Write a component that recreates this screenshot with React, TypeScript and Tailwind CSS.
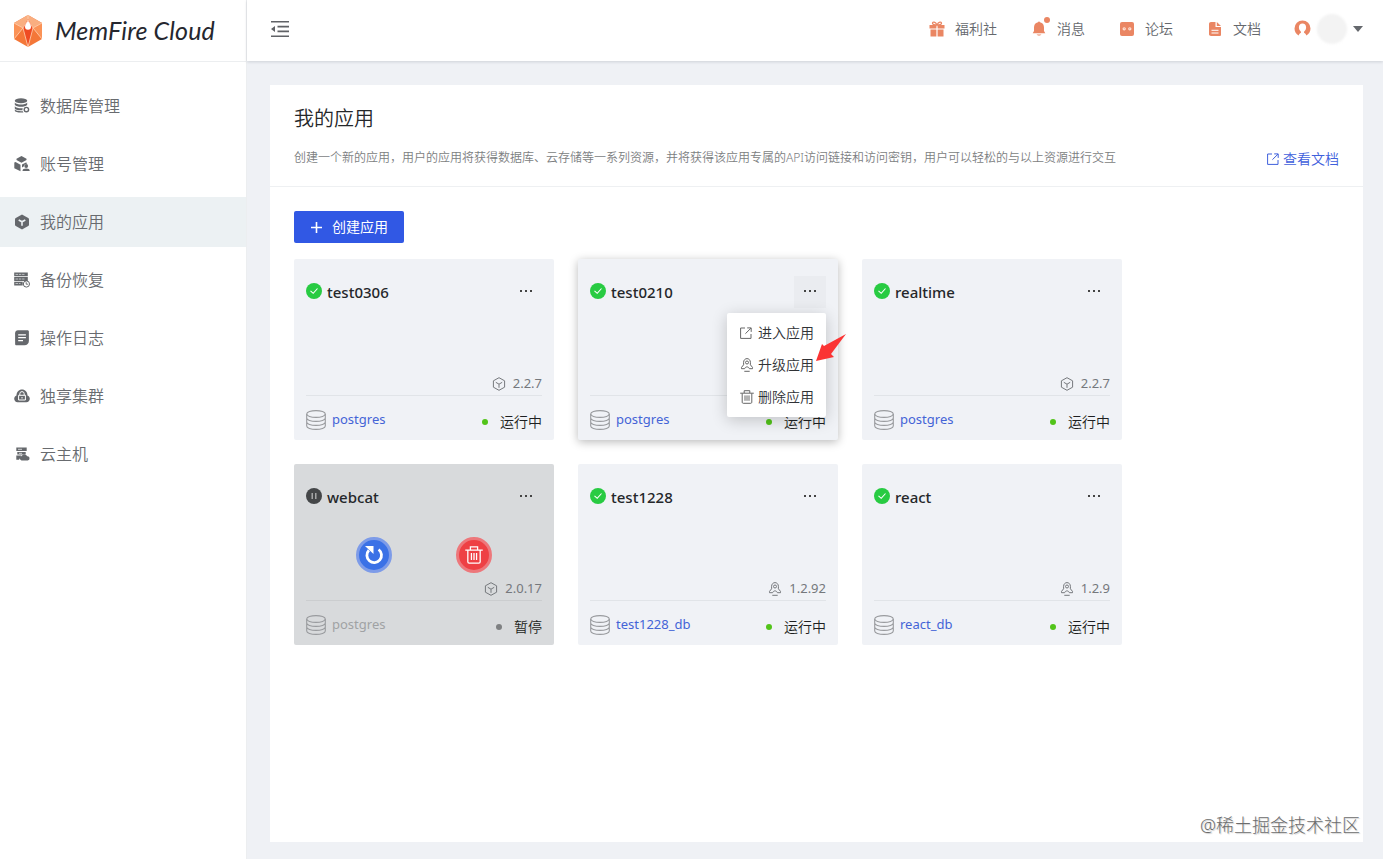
import { ReactNode } from "react";
import { clsx } from "clsx";

type IconName = "cube" | "rocket";

interface AppProps {
  name: string;
  db: string;
  version: string;
  icon: IconName;
  paused?: boolean;
  active?: boolean;
}

interface MenuProps {
  label: string;
  icon: ReactNode;
}

const apps: AppProps[] = [
  { name: "test0306", db: "postgres", version: "2.2.7", icon: "cube" },
  { name: "test0210", db: "postgres", version: "2.2.7", icon: "cube", active: true },
  { name: "realtime", db: "postgres", version: "2.2.7", icon: "cube" },
  { name: "webcat", db: "postgres", version: "2.0.17", icon: "cube", paused: true },
  { name: "test1228", db: "test1228_db", version: "1.2.92", icon: "rocket" },
  { name: "react", db: "react_db", version: "1.2.9", icon: "rocket" },
];

const menu: MenuProps[] = [
  {
    label: "数据库管理",
    icon: (
      <>
        <ellipse cx="7" cy="2.8" rx="6.2" ry="2.5" />
        <path d="M.8 4.600c1 1.500 3.600 2 6.200 2s5.200-.5 6.200-2v2.200c-1 1.400-3.600 2-6.200 2s-5.200-.6-6.200-2z" />
        <path d="M.8 8.200c1 1.500 3.600 2 6.200 2h1.800a3.800 3.800 0 0 0-.3 2H7c-3 0-6.200-.6-6.200-2z" />
        <path d="M.8 11.600c1 1.200 3.600 1.700 6.200 1.700h1.800l.6 1.200c-4 .4-8.600-.2-8.600-2z" />
        <circle cx="12.400" cy="11.600" r="2.200" fill="none" stroke="currentColor" strokeWidth="1.400" />
      </>
    ),
  },
  {
    label: "账号管理",
    icon: (
      <>
        <path d="M7.500 0l5 2.700v1.200L7.500 6.800l-5-2.900V2.700z" />
        <path d="M.3 6.500l1.200-.6 5 2.800v6.500L.3 12.200z" />
        <path d="M8 8.600l4-2.200 1 .5-.3.800c-1.600 0-2.700 1.100-2.700 2.600L8 11.500z" />
        <circle cx="12.200" cy="10" r="1.900" />
        <path d="M8.500 15c0-2 1.500-2.600 3.700-2.600s3.500.6 3.500 2.600z" />
      </>
    ),
  },
  {
    label: "我的应用",
    icon: (
      <>
        <path d="M8 .6l6.200 3.500c.5.300.8.700.8 1.200v5.500c0 .5-.3.900-.8 1.200L8 15.400 1.800 12c-.5-.3-.8-.7-.8-1.200V5.300c0-.5.300-.9.8-1.200z" />
        <path d="M4.700 6L8 7.800 11.300 6M8 7.800v4" fill="none" stroke="#ecf1f3" strokeWidth="1.600" />
      </>
    ),
  },
  {
    label: "备份恢复",
    icon: (
      <>
        <path d="M.2 .4h13.600v3.900H.2zM.2 5.100h13.600v3.800H.2zM.2 9.700h8.500v3.700H.2z" />
        <path d="M1.500 2.400h9M1.500 7h9M1.500 11.500h5" stroke="#c4c7ca" strokeWidth=".9" strokeDasharray="2.500 .8" />
        <circle cx="12.400" cy="12" r="3.100" fill="#fff" stroke="currentColor" />
        <path d="M12.200 10.200v2H14" fill="none" stroke="currentColor" strokeWidth=".9" />
      </>
    ),
  },
  {
    label: "操作日志",
    icon: (
      <>
        <path d="M4 .3h9.500c.8 0 1.400.6 1.400 1.400v9c0 2.800-1.800 4.600-4.500 4.600H2.500c-.8 0-1.400-.5-1.400-1.300V3.200C1.100 1.500 2.300.3 4 .3z" />
        <path d="M4.200 4.800h7.700M4.200 7.700h7.700M4.200 10.600h4.800" stroke="#fff" strokeWidth="1.200" />
      </>
    ),
  },
  {
    label: "独享集群",
    icon: (
      <>
        <path d="M3.600 14.200C1.700 14.200.2 12.700.2 10.800c0-1.600.9-2.800 2.300-3.300C2.600 4 4.900 1.500 8 1.500s5.400 2.500 5.500 6c1.400.5 2.300 1.700 2.300 3.300 0 1.900-1.500 3.400-3.400 3.400z" />
        <path d="M5.800 7V5.800a2.200 2.200 0 0 1 4.400 0V7M4.600 7.300h6.800v4.700H4.600zM8 9v1.500" fill="none" stroke="#fff" strokeWidth="1" />
      </>
    ),
  },
  {
    label: "云主机",
    icon: (
      <>
        <path d="M2.300 1.500h10.400V5H2.300zM3.300 6h8.400v2.600H3.300zM2.300 9.500h5.200L5 13.800H2.300z" />
        <path d="M4 3.300h4M5 7.300h3" stroke="#fff" strokeWidth=".7" />
        <path d="M7.500 14.400a2.300 2.300 0 0 1 .2-4.500 3.100 3.100 0 0 1 5.500.3 2.100 2.100 0 0 1 .5 4.200z" />
      </>
    ),
  },
];

function CubeIcon() {
  return (
    <svg className="h-[14px] w-[14px]" viewBox="0 0 14 14" fill="none" stroke="currentColor">
      <path d="M7 .7l5.600 3.100v6.400L7 13.300 1.400 10.200V3.800zM3.800 5.300L7 7.200l3.200-1.900M7 7.200v3.600" />
    </svg>
  );
}

function RocketIcon() {
  return (
    <svg className="h-[14px] w-[14px]" viewBox="0 0 14 14" fill="none" stroke="currentColor">
      <path d="M3.600 6.800V4.300C3.600 2.100 5.200.6 7 .6s3.400 1.500 3.400 3.700v2.500l2.100 2.600v1.300H9.400c-.5-1.200-1.300-1.800-2.400-1.800s-1.900.6-2.400 1.800H1.500V9.400zM4.300 13.300h5.400" />
      <circle cx="7" cy="4.500" r="1.500" />
    </svg>
  );
}

function TrashIcon({ className }: { className: string }) {
  return (
    <svg className={className} viewBox="0 0 14 14" fill="none" stroke="currentColor">
      <path d="M.2 3.200h13.600M4.200 3V.7h5.600V3M2.200 3.400v8.900c0 .6.4 1 1 1h7.600c.6 0 1-.4 1-1V3.400M5 5.400v5.400M7 5.400v5.400M9 5.400v5.400" />
    </svg>
  );
}

function ExportIcon({ className }: { className: string }) {
  return (
    <svg className={className} viewBox="0 0 12 12" fill="none" stroke="currentColor">
      <path d="M5 1H.6v10.400H11V7M7.200.9h4v4M11 1.100L5.400 6.700" />
    </svg>
  );
}

function StatusIcon({ paused }: { paused?: boolean }) {
  return (
    <svg className="h-4 w-4 -mt-[2px]" viewBox="0 0 16 16" fill="none">
      <circle cx="8" cy="8" r="8" fill={paused ? "#444648" : "#28cb42"} />
      {paused ? (
        <path d="M6.200 5v6M9.800 5v6" stroke="#b5b6b7" strokeWidth="1.300" />
      ) : (
        <path d="M4.500 7.800l2.700 2.500 4.300-4.800" stroke="#fff" strokeWidth="1.100" />
      )}
    </svg>
  );
}

function Dropdown() {
  return (
    <div className="absolute right-3 top-[54px] z-10 h-[104px] w-[99px] rounded-[2px] bg-white py-1 text-sm font-[350] text-[#303236] shadow-[0_3px_16px_rgba(0,0,0,0.2)]">
      <div className="flex h-8 items-center gap-[5px] pl-[13px]">
        <span className="flex w-[13px] text-[#666]"><ExportIcon className="h-3 w-3 shrink-0" /></span>
        <span>进入应用</span>
      </div>
      <div className="flex h-8 items-center gap-[5px] pl-[13px]">
        <span className="flex w-[13px] justify-center text-[#666] *:shrink-0"><RocketIcon /></span>
        <span>升级应用</span>
      </div>
      <div className="flex h-8 items-center gap-[5px] pl-[13px]">
        <span className="flex w-[13px] justify-center text-[#666]"><TrashIcon className="h-[14px] w-[14px] shrink-0" /></span>
        <span>删除应用</span>
      </div>
      <svg className="absolute left-[88px] top-[20px] h-[30px] w-[32px]" viewBox="0 0 32 30" fill="#fb3434">
        <path d="M31 1L9 13l-2-2L1 28l18-4-3-3z" />
      </svg>
    </div>
  );
}

function AppCard({ app }: { app: AppProps }) {
  return (
    <div
      className={clsx(
        "relative flex h-[181px] w-[260px] flex-col rounded-[2px] px-3",
        app.paused ? "bg-[#d8dadc]" : "bg-[#f0f2f6]",
        app.active && "shadow-[0_2px_10px_rgba(0,0,0,0.28)]"
      )}
    >
      <div className="mt-[17px] flex h-8 items-center">
        <StatusIcon paused={app.paused} />
        <h2 className="ml-[5px] text-[15px] font-medium leading-6 text-[#25272a]">{app.name}</h2>
        <button
          className={clsx(
            "ml-auto flex h-8 w-8 items-center justify-center gap-[3px] pb-[2px]",
            app.active && "bg-[#eaecf0]"
          )}
        >
          <i className="size-[2px] bg-[#444]" />
          <i className="size-[2px] bg-[#444]" />
          <i className="size-[2px] bg-[#444]" />
        </button>
      </div>

      <div className="flex h-[66px] justify-center gap-16 pt-6">
        {app.paused && (
          <>
            <button className="flex size-9 items-center justify-center rounded-full border-[3px] border-[#7d9be8] bg-[#3b71e6] text-white">
              <svg className="h-5 w-5" viewBox="0 0 20 20" fill="none">
                <path d="M14.600 4.500a7.300 7.300 0 1 1-9.700.8" stroke="#fff" strokeWidth="2.800" />
                <path d="M1 1h8.500v8z" fill="#fff" />
              </svg>
            </button>
            <button className="flex size-9 items-center justify-center rounded-full border-[3px] border-[#ed777b] bg-[#ee4044] text-white">
              <TrashIcon className="h-[18px] w-[18px]" />
            </button>
          </>
        )}
      </div>

      <div className="flex h-5 items-center justify-end gap-[7px] text-[#75787c]">
        {app.icon === "cube" ? <CubeIcon /> : <RocketIcon />}
        <span className="text-[13px]">{app.version}</span>
      </div>

      <div className={clsx("mt-px h-px", app.paused ? "bg-[#cbcdcf]" : "bg-[#e1e4e8]")} />

      <div className="mt-3 flex h-6 items-center">
        <svg className="h-5 w-5" viewBox="0 0 20 20" fill="none" stroke="#999b9e" strokeWidth="1.100">
          <ellipse cx="10" cy="4" rx="9.300" ry="3.400" />
          <path d="M.7 4v12c0 1.900 4.200 3.400 9.300 3.400s9.300-1.500 9.300-3.400V4M.7 8c0 1.900 4.200 3.400 9.300 3.400S19.300 9.900 19.300 8M.7 12c0 1.900 4.200 3.400 9.300 3.400s9.300-1.500 9.300-3.400" />
        </svg>
        <a className={clsx("ml-[6px] text-[13px]", app.paused ? "text-[#a0a2a4]" : "text-[#4464d6]")}>{app.db}</a>
        <span className="ml-auto mt-[3px] flex items-center text-sm font-[350] text-[#1d1f21]">
          <i className={clsx("mr-3 size-[6px] rounded-full", app.paused ? "bg-[#7e8082]" : "bg-[#52c41a]")} />
          {app.paused ? "暂停" : "运行中"}
        </span>
      </div>

      {app.active && <Dropdown />}
    </div>
  );
}

function Logo() {
  return (
    <div className="flex h-[62px] items-center border-b border-[#eceef0] pl-[13px]">
      <svg className="h-8 w-[30px]" viewBox="0 0 30 32">
        <path d="M15 0l14 8v16l-14 8L1 24V8z" fill="#f47738" />
        <path d="M15 0l14 8-9 5-5-9-5 9-9-5z" fill="#f9ae80" />
        <path d="M1 8l9 5-9 11zM29 8l-9 5 9 11z" fill="#fb9256" />
        <path d="M10 13l5-9 5 9-5 19z" fill="#ef4b23" />
        <path d="M15 0v7M1 8l9 5 5 19 5-19 9-5M10 13L1 24M20 13l9 11M10 13l5-8 5 8" fill="none" stroke="#ffd3b5" strokeWidth=".8" />
        <path d="M15 6c1.500 2 3 3.700 3 5.700a3 3 0 0 1-6 0C12 9.700 13.500 8 15 6z" fill="#fff" />
      </svg>
      <span className="ml-3 whitespace-nowrap font-['Lato'] text-[25px] italic tracking-[0.15px] text-[#25272f]">
        MemFire Cloud
      </span>
    </div>
  );
}

function Header() {
  return (
    <header className="z-10 flex h-[61px] shrink-0 items-center bg-white pl-6 pr-5 text-sm font-[350] text-[#65686d] shadow-[0_1px_3px_rgba(0,21,41,0.14)]">
      <svg className="-mt-[3px] h-4 w-[18px]" viewBox="0 0 18 16" fill="#606266">
        <path d="M0 0h18v1.600H0zM6.500 4.800H18v1.600H6.500zM6.500 9.600H18v1.600H6.500zM0 14.400h18V16H0zM0 8l4-3v6z" />
      </svg>

      <nav className="-mt-[3px] ml-auto flex items-center">
        <span className="flex items-center gap-[10px]">
          <svg className="h-4 w-4" viewBox="0 0 16 16" fill="#ea8663">
            <path d="M.5 4h6.900v3.500H.5zM8.600 4h6.900v3.500H8.600zM1.500 8.500h5.900v7H1.500zM8.600 8.500h5.900v7H8.600z" />
            <path d="M8 4C6.500.5 3.500.4 3.500 2.300 3.500 3.500 5 4 8 4s4.500-.5 4.500-1.700C12.500.4 9.500.5 8 4z" fill="none" stroke="#ea8663" strokeWidth="1.300" />
          </svg>
          福利社
        </span>
        <span className="relative ml-[35px] flex items-center gap-[11px]">
          <svg className="h-4 w-[14px]" viewBox="0 0 14 16" fill="#ea8663">
            <path d="M7 .2l1 1c2.800.6 4 2.500 4 5.300v3.600l1.300 2.200H.7L2 10.100V6.500c0-2.800 1.200-4.700 4-5.300zM4.500 13.400h5L8 14.600H6z" />
          </svg>
          <i className="absolute -top-[2px] left-[12px] size-[6px] rounded-full bg-[#ea8663]" />
          消息
        </span>
        <span className="ml-[34px] flex items-center gap-[10px]">
          <svg className="h-4 w-4" viewBox="0 0 16 16">
            <rect x="1" y="1" width="14" height="14" rx="2" fill="#ea8663" />
            <circle cx="5.200" cy="7.800" r="1.100" fill="#ea8663" stroke="#ffe8dd" strokeWidth="1.100" />
            <circle cx="10.800" cy="7.800" r="1.100" fill="#ea8663" stroke="#ffe8dd" strokeWidth="1.100" />
          </svg>
          论坛
        </span>
        <span className="ml-[35px] flex items-center gap-[11px]">
          <svg className="h-4 w-[14px]" viewBox="0 0 14 16">
            <path d="M3 1h4.500v5H13v7.500c0 1-.5 1.500-1.500 1.500H3c-1 0-2-.6-2-1.700V3c0-1.200.8-2 2-2zM8.800 1l4.200 4H8.800z" fill="#ea8663" />
            <path d="M3.500 9.300h7M3.500 12h7" stroke="#fff" />
          </svg>
          文档
        </span>
        <svg className="-mt-px ml-[33px] h-[17px] w-[17px]" viewBox="0 0 17 17">
          <path
            d="M8.500.4a8 8 0 0 0-8 8c0 3.200 1.700 5.700 4.200 7 .4-1.200 1.200-2.100 2.200-2.600.3-.6 0-1.200-.5-1.700C5.400 10.200 4.900 8.800 4.900 7.300c0-2.200 1.400-3.700 3.600-3.700s3.600 1.500 3.600 3.700c0 1.500-.5 2.900-1.500 3.800-.5.5-.8 1.100-.5 1.700 1 .5 1.800 1.400 2.200 2.600 2.500-1.300 4.200-3.800 4.200-7a8 8 0 0 0-8-8z"
            fill="#ea8663"
          />
        </svg>
        <span className="ml-[6px] h-[30px] w-[30px] rounded-full bg-[#f3f3f3] blur-[1px]" />
        <i className="ml-[6px] border-x-[5px] border-t-[6px] border-x-transparent border-t-[#65686d]" />
      </nav>
    </header>
  );
}

export default function App() {
  return (
    <div className="flex h-[859px] w-[1383px] overflow-hidden bg-[#eff1f5] font-['Noto_Sans','Noto_Sans_CJK_SC',sans-serif]">
      <aside className="w-[246px] shrink-0 bg-white">
        <Logo />
        <nav className="mt-[19px] flex flex-col gap-2">
          {menu.map((item) => (
            <a
              key={item.label}
              className={clsx(
                "flex h-[50px] items-center pl-[14px] font-[350] text-[#686b6f]",
                item.label === "我的应用" && "bg-[#ecf1f3]"
              )}
            >
              <svg className="h-4 w-4 text-[#65686c]" viewBox="0 0 16 16" fill="currentColor">
                {item.icon}
              </svg>
              <span className="ml-[10px]">{item.label}</span>
            </a>
          ))}
        </nav>
      </aside>

      <div className="flex min-w-0 flex-1 flex-col border-l border-[#eceef0]">
        <Header />

        <main className="relative ml-[23px] mr-5 mt-6 h-[757px] bg-white">
          <section className="flex h-[102px] items-start justify-between border-b border-[#eef0f2] px-6">
            <div>
              <h1 className="mt-[19px] text-xl font-[350] leading-[30px] text-[#25272a]">我的应用</h1>
              <p className="mt-[14px] whitespace-nowrap text-xs font-[350] leading-5 text-[#7c7e81]">
                创建一个新的应用，用户的应用将获得数据库、云存储等一系列资源，并将获得该应用专属的API访问链接和访问密钥，用户可以轻松的与以上资源进行交互
              </p>
            </div>
            <a className="mt-16 flex items-center gap-1 text-sm font-[350] leading-5 text-[#3f60dc]">
              <ExportIcon className="h-3 w-3" />
              查看文档
            </a>
          </section>

          <section className="px-6 pt-6">
            <button className="flex h-8 w-[110px] items-center rounded-[2px] bg-[#3158e4] pl-[17px] text-sm text-white">
              <svg className="h-[11px] w-[11px]" viewBox="0 0 11 11" stroke="#fff" strokeWidth="1.600">
                <path d="M0 5.500h11M5.500 0v11" />
              </svg>
              <span className="ml-[10px]">创建应用</span>
            </button>

            <div className="mt-4 flex w-[860px] flex-wrap gap-6">
              {apps.map((app) => (
                <AppCard key={app.name} app={app} />
              ))}
            </div>
          </section>

          <span className="absolute bottom-[3px] right-[3px] text-lg font-light leading-7 text-[#6c6c6c] [text-shadow:1px_1px_1px_#ccc]">
            @稀土掘金技术社区
          </span>
        </main>
      </div>
    </div>
  );
}
